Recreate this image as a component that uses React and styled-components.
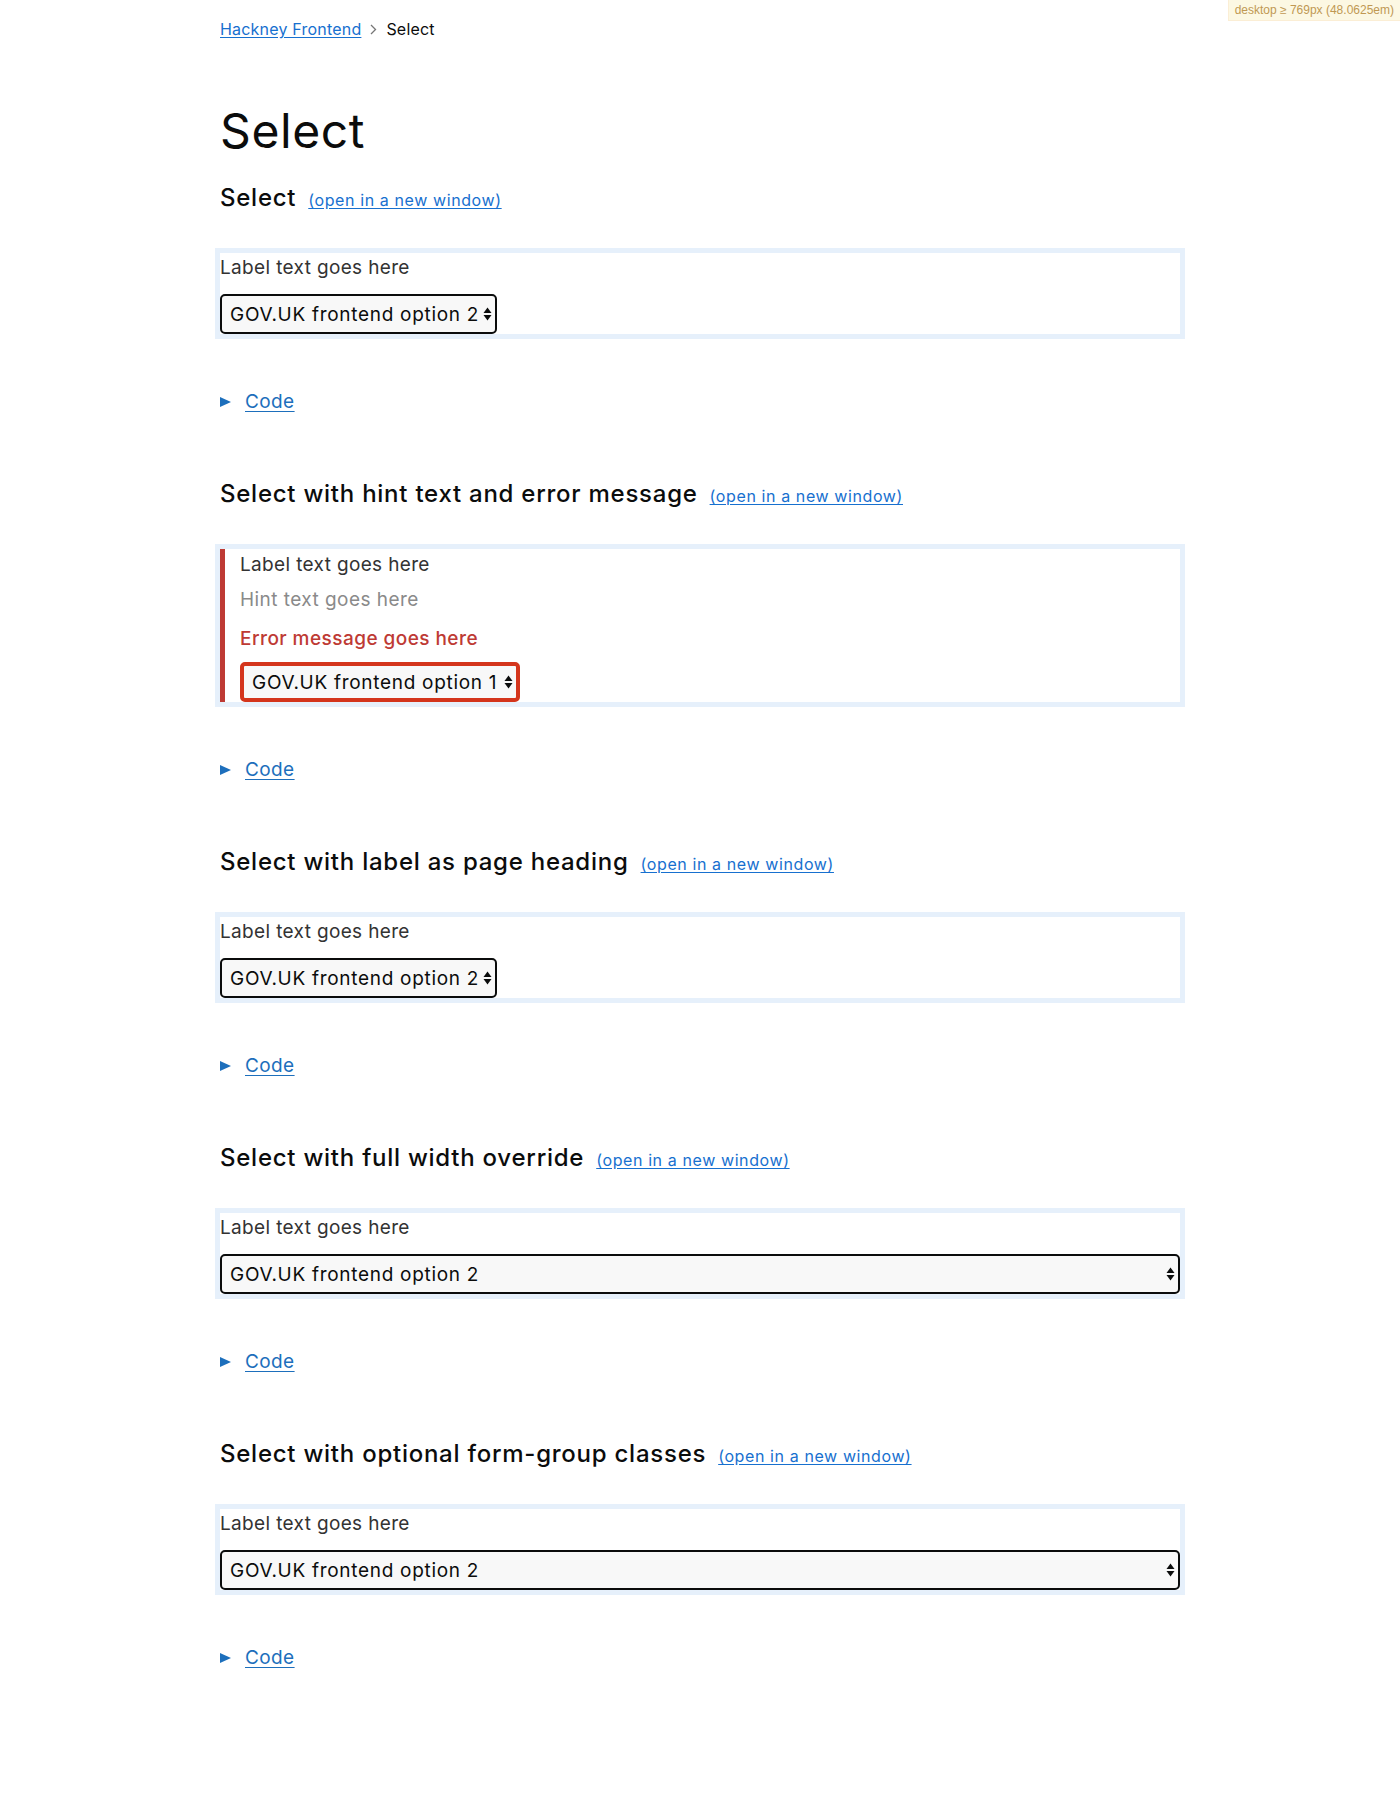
import React from 'react';
import styled, { createGlobalStyle, css } from 'styled-components';

const examples = [
  { title: 'Select', value: 'GOV.UK frontend option 2' },
  {
    title: 'Select with hint text and error message',
    value: 'GOV.UK frontend option 1',
    hint: 'Hint text goes here',
    error: 'Error message goes here',
  },
  { title: 'Select with label as page heading', value: 'GOV.UK frontend option 2' },
  { title: 'Select with full width override', value: 'GOV.UK frontend option 2', full: true },
  { title: 'Select with optional form-group classes', value: 'GOV.UK frontend option 2', full: true },
];

const GlobalStyle = createGlobalStyle`
  body {
    margin: 0;
    background: #ffffff;
    color: #0b0c0c;
    font-family: Inter, "Noto Sans", sans-serif;
  }
`;

const Page = styled.main`
  max-width: 960px;
  margin: 0 auto;
  padding: 19px 0 120px;
`;

const Breadcrumbs = styled.nav`
  display: flex;
  align-items: center;
  gap: 9px;
  height: 20px;
  font-size: 16px;
  line-height: 20px;
  letter-spacing: 0.2px;
`;

const Crumb = styled.a`
  color: #1770cf;
  text-decoration: underline;
  text-underline-offset: 2px;
`;

const Current = styled.span`
  color: #0b0c0c;
`;

const Title = styled.h1`
  margin: 67px 0 27px;
  font-size: 48px;
  line-height: 50px;
  font-weight: 400;
  letter-spacing: 0.6px;
`;

const Example = styled.section`
  & + & {
    margin-top: 65px;
  }
`;

const ExampleHeading = styled.h2`
  height: 30px;
  margin: 0 0 35px;
  font-size: 24px;
  line-height: 30px;
  font-weight: 500;
  letter-spacing: 0.75px;
`;

const NewWindowLink = styled.a`
  margin-left: 12px;
  font-size: 16px;
  line-height: 1;
  font-weight: 400;
  letter-spacing: 0.6px;
  color: #1770cf;
  text-decoration: underline;
  text-underline-offset: 2px;
`;

const Frame = styled.div`
  margin: 0 -5px;
  border: 5px solid #e6f0fb;
`;

const FormGroup = styled.div`
  display: flex;
  flex-direction: column;
  align-items: flex-start;
  ${(p) =>
    p.$error &&
    css`
      padding: 1px 0 0 15px;
      border-left: 5px solid #be3a34;
    `}
`;

const Label = styled.label`
  margin-bottom: 6px;
  font-size: 19px;
  line-height: 29px;
  letter-spacing: 0.35px;
  color: #333333;
`;

const Hint = styled.div`
  margin-bottom: 10px;
  font-size: 19px;
  line-height: 29px;
  letter-spacing: 0.45px;
  color: #8a8a8a;
`;

const ErrorMessage = styled.div`
  margin-bottom: 9px;
  font-size: 19px;
  line-height: 29px;
  font-weight: 500;
  letter-spacing: 0.45px;
  color: #be3a34;
`;

const SelectBox = styled.div`
  box-sizing: border-box;
  display: flex;
  align-items: center;
  justify-content: space-between;
  gap: ${(p) => (p.$error ? '7px' : '4px')};
  width: ${(p) => (p.$full ? '100%' : 'auto')};
  height: 40px;
  padding: 0 3px 0 8px;
  border: ${(p) => (p.$error ? '4px solid #d4351c' : '2px solid #0b0c0c')};
  border-radius: 5px;
  background: #f8f8f8;
  font-size: 19px;
  letter-spacing: 0.7px;
  color: #0b0c0c;
  white-space: nowrap;

  ${Label} + & {
    margin-top: 6px;
  }
`;

const Details = styled.details`
  margin-top: 50px;
  font-size: 19px;
  line-height: 25px;
  letter-spacing: 0.4px;
`;

const Summary = styled.summary`
  display: flex;
  align-items: center;
  gap: 14px;
  width: fit-content;
  height: 25px;
  list-style: none;
  color: #1d6fbc;
  cursor: pointer;

  &::-webkit-details-marker {
    display: none;
  }

  &::before {
    content: '';
    border-left: 11px solid currentColor;
    border-top: 5.5px solid transparent;
    border-bottom: 5.5px solid transparent;
  }
`;

const SummaryText = styled.span`
  text-decoration: underline;
  text-underline-offset: 3px;
`;

const Breakpoint = styled.div`
  position: fixed;
  top: 0;
  right: 0;
  padding: 3px 6px;
  background: #fcf8e3;
  border-left: 1px solid #fbeed5;
  border-bottom: 1px solid #fbeed5;
  color: #c09853;
  font-family: 'Liberation Sans', Arial, sans-serif;
  font-size: 12px;
  line-height: 14px;
`;

const Chevron = () => (
  <svg width="7" height="11" viewBox="0 0 7 11" aria-hidden="true">
    <polyline points="1,1 5.5,5.5 1,10" fill="none" stroke="#767676" strokeWidth="1.3" />
  </svg>
);

const Arrows = () => (
  <svg width="9" height="14" viewBox="0 0 9 14" aria-hidden="true">
    <polygon points="0.5,6 4.5,0.5 8.5,6" fill="#0b0c0c" />
    <polygon points="0.5,8 8.5,8 4.5,13.5" fill="#0b0c0c" />
  </svg>
);

const App = () => (
  <>
    <GlobalStyle />
    <Breakpoint>desktop ≥ 769px (48.0625em)</Breakpoint>
    <Page>
      <Breadcrumbs>
        <Crumb href="#">Hackney Frontend</Crumb>
        <Chevron />
        <Current>Select</Current>
      </Breadcrumbs>
      <Title>Select</Title>
      {examples.map(({ title, value, hint, error, full }) => (
        <Example key={title}>
          <ExampleHeading>
            {title}
            <NewWindowLink href="#">(open in a new window)</NewWindowLink>
          </ExampleHeading>
          <Frame>
            <FormGroup $error={!!error}>
              <Label>Label text goes here</Label>
              {hint && <Hint>{hint}</Hint>}
              {error && <ErrorMessage>{error}</ErrorMessage>}
              <SelectBox $full={full} $error={!!error}>
                <span>{value}</span>
                <Arrows />
              </SelectBox>
            </FormGroup>
          </Frame>
          <Details>
            <Summary>
              <SummaryText>Code</SummaryText>
            </Summary>
          </Details>
        </Example>
      ))}
    </Page>
  </>
);

export default App;
